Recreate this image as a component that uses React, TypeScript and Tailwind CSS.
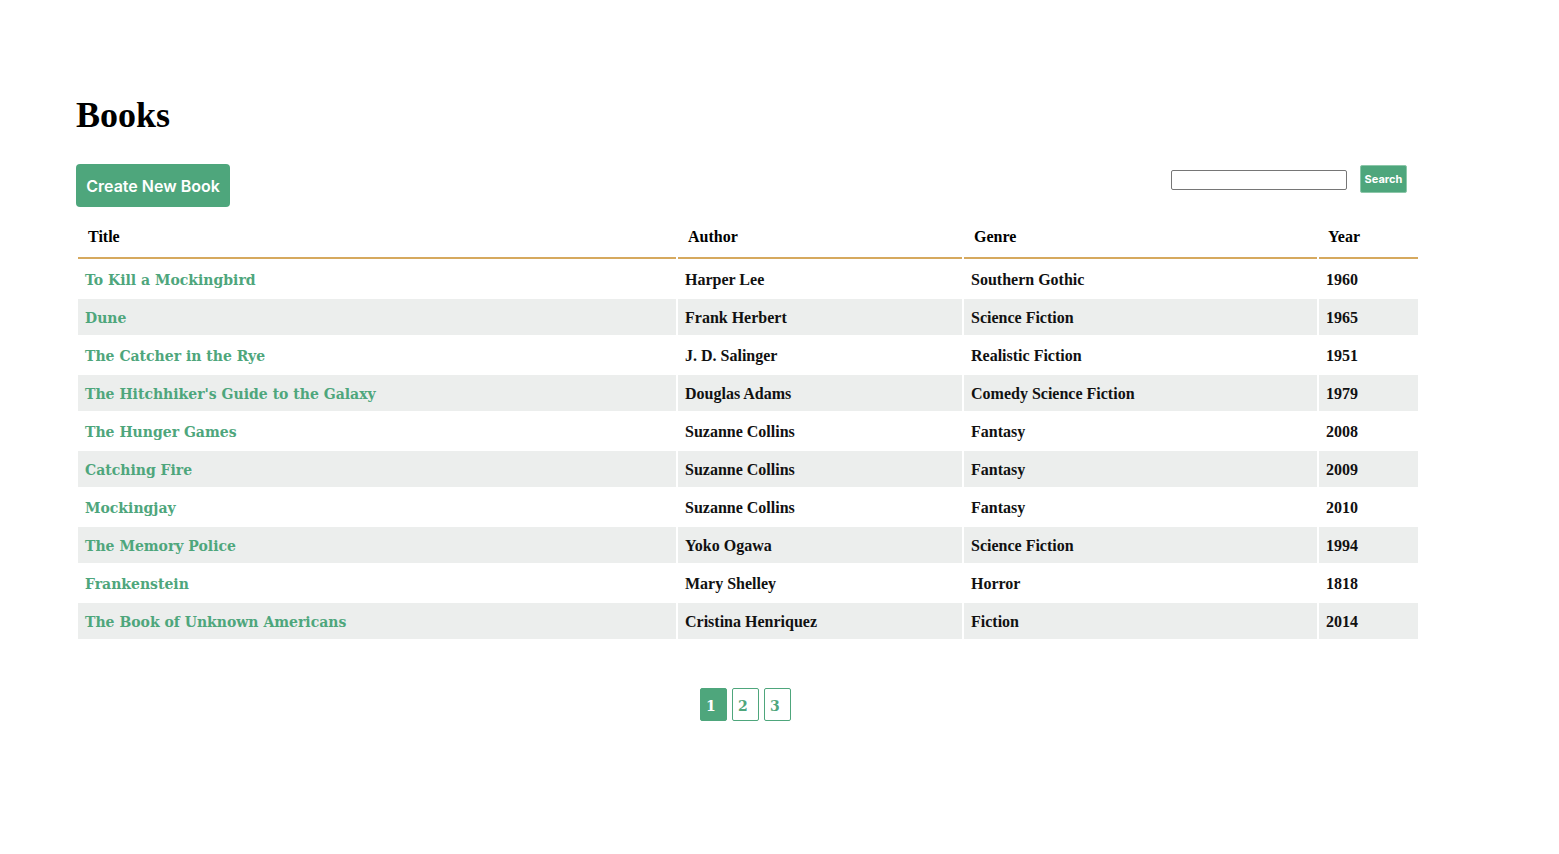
const books = [
  { title: 'To Kill a Mockingbird', author: 'Harper Lee', genre: 'Southern Gothic', year: 1960 },
  { title: 'Dune', author: 'Frank Herbert', genre: 'Science Fiction', year: 1965 },
  { title: 'The Catcher in the Rye', author: 'J. D. Salinger', genre: 'Realistic Fiction', year: 1951 },
  { title: "The Hitchhiker's Guide to the Galaxy", author: 'Douglas Adams', genre: 'Comedy Science Fiction', year: 1979 },
  { title: 'The Hunger Games', author: 'Suzanne Collins', genre: 'Fantasy', year: 2008 },
  { title: 'Catching Fire', author: 'Suzanne Collins', genre: 'Fantasy', year: 2009 },
  { title: 'Mockingjay', author: 'Suzanne Collins', genre: 'Fantasy', year: 2010 },
  { title: 'The Memory Police', author: 'Yoko Ogawa', genre: 'Science Fiction', year: 1994 },
  { title: 'Frankenstein', author: 'Mary Shelley', genre: 'Horror', year: 1818 },
  { title: 'The Book of Unknown Americans', author: 'Cristina Henriquez', genre: 'Fiction', year: 2014 },
];

const serif = "font-['Liberation_Serif','Times_New_Roman',serif]";

export default function App() {
  return (
    <div className={`min-h-screen bg-white text-[#111] ${serif}`}>
      <div className="ml-[76px] w-[1344px] pt-[97px]">
        <h1 className="text-[36px] leading-[36px] font-bold text-black">Books</h1>

        <div className="mt-[31px] flex items-start justify-between">
          <button className="h-[43px] w-[154px] rounded-[4px] bg-[#4ea67c] text-[16px] font-semibold text-white font-['Inter','Liberation_Sans',sans-serif]">
            Create New Book
          </button>
          <form className="mr-[13px] mt-px flex items-start gap-[13px]" onSubmit={(e) => e.preventDefault()}>
            <input
              type="text"
              className="mt-[5px] h-[20px] w-[176px] rounded-[2px] border border-[#767676] bg-white px-1 text-[13px]"
            />
            <button className="h-[28px] w-[47px] rounded-[2px] border border-[#8cc7a9] bg-[#4ea67c] text-[11px] font-bold text-white font-['Inter','Liberation_Sans',sans-serif]">
              Search
            </button>
          </form>
        </div>

        <table className="mt-[10px] w-full table-fixed border-separate border-spacing-[2px] text-[16px]">
          <thead>
            <tr>
              <th className="h-[40px] w-[598px] border-b-2 border-[#d6a95e] px-[10px] pb-[2px] text-left font-bold text-black">Title</th>
              <th className="h-[40px] w-[284px] border-b-2 border-[#d6a95e] px-[10px] pb-[2px] text-left font-bold text-black">Author</th>
              <th className="h-[40px] w-[353px] border-b-2 border-[#d6a95e] px-[10px] pb-[2px] text-left font-bold text-black">Genre</th>
              <th className="h-[40px] w-[99px] border-b-2 border-[#d6a95e] px-[9px] pb-[2px] text-left font-bold text-black">Year</th>
            </tr>
          </thead>
          <tbody>
            {books.map((b, i) => (
              <tr key={b.title} className={i % 2 === 1 ? 'bg-[#eceeed]' : 'bg-white'}>
                <td className="h-[36px] px-[7px] pt-[2px] pb-0">
                  <a href="#" className="font-['DejaVu_Serif',serif] text-[14px] font-bold text-[#4ea67c]">{b.title}</a>
                </td>
                <td className="h-[36px] px-[7px] pt-[2px] pb-0 font-bold">{b.author}</td>
                <td className="h-[36px] px-[7px] pt-[2px] pb-0 font-bold">{b.genre}</td>
                <td className="h-[36px] px-[7px] pt-[2px] pb-0 font-bold">{b.year}</td>
              </tr>
            ))}
          </tbody>
        </table>

        <div className="mt-[47px] flex justify-center gap-[5px] pr-[5px]">
          {[1, 2, 3].map((n) => (
            <button
              key={n}
              className={
                n === 1
                  ? "h-[33px] w-[27px] rounded-[2px] border border-[#4ea67c] bg-[#4ea67c] pl-[5px] pt-[3px] text-left font-['DejaVu_Serif',serif] text-[14px] font-bold text-white"
                  : "h-[33px] w-[27px] rounded-[2px] border border-[#4ea67c] bg-white pl-[5px] pt-[3px] text-left font-['DejaVu_Serif',serif] text-[14px] font-bold text-[#4ea67c]"
              }
            >
              {n}
            </button>
          ))}
        </div>
      </div>
    </div>
  );
}
